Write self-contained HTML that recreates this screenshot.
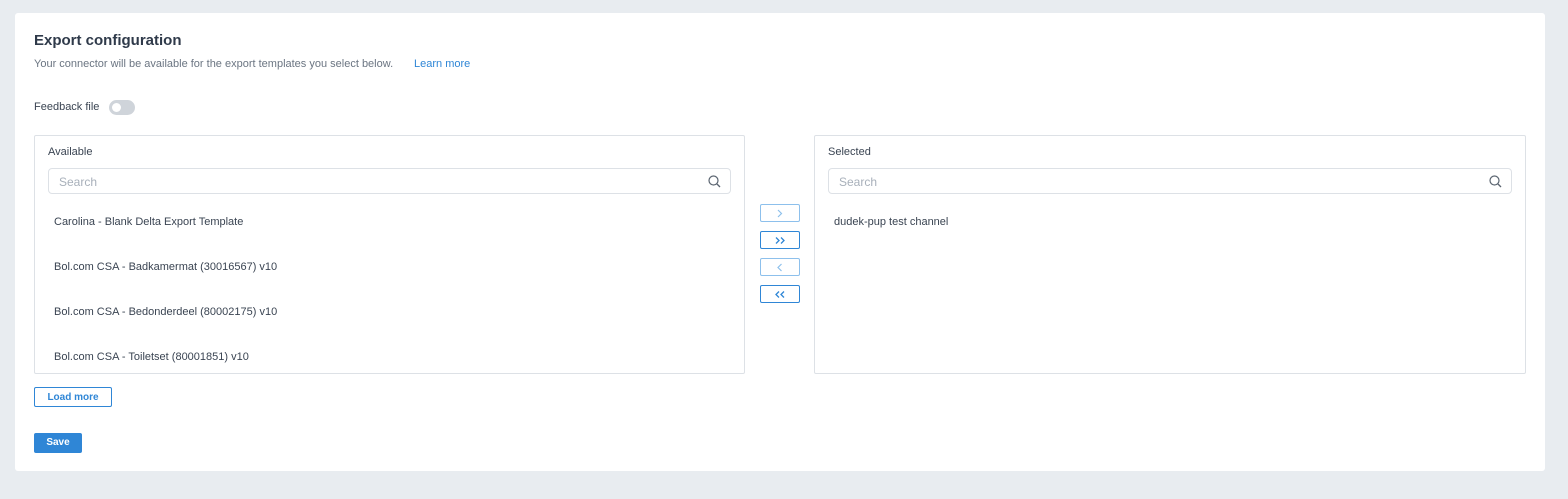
<!DOCTYPE html>
<html><head><style>
*{box-sizing:border-box;margin:0;padding:0}
body{width:1568px;height:499px;background:#e8ecf0;font-family:"Liberation Sans",Arial,sans-serif;position:relative;overflow:hidden;color:#3a4452}
.card{position:absolute;left:15px;top:13px;width:1530px;height:458px;background:#fff;border-radius:3px}
.a{position:absolute}
h1{position:absolute;left:34px;top:32px;font-size:15px;font-weight:bold;color:#2f3a4a}
.panel{position:absolute;top:135px;height:239px;border:1px solid #dde1e6;border-radius:2px;background:#fff}
.lbl{position:absolute;left:13px;top:10px;font-size:11px;color:#3a4452}
.search{position:absolute;left:13px;top:32px;height:26px;border:1px solid #dde1e6;border-radius:4px;font-size:12px;color:#a8b0ba;padding:6px 10px}
.item{position:absolute;left:19px;font-size:11px;color:#3a4452}
.btn{position:absolute;left:760px;width:40px;height:18px;border:1px solid #2f86d6;border-radius:2px;background:#fff}
.btn svg{position:absolute;left:14px;top:4px}
.dis{border-color:#8dc0ec}
</style></head><body>
<div class="card"></div>
<h1>Export configuration</h1>
<div class="a" style="left:34px;top:58px;font-size:11px;color:#6b7582;white-space:nowrap">Your connector will be available for the export templates you select below.</div>
<div class="a" style="left:414px;top:58px;font-size:11px;color:#2f86d6">Learn more</div>
<div class="a" style="left:34px;top:101px;font-size:11px;color:#3a4452">Feedback file</div>
<div class="a" style="left:109px;top:100px;width:26px;height:15px;border-radius:8px;background:#cfd4da"><div style="position:absolute;left:3px;top:3px;width:9px;height:9px;border-radius:50%;background:#fff"></div></div>

<div class="panel" style="left:34px;width:711px">
<div class="lbl">Available</div>
<div class="search" style="width:683px">Search<svg style="position:absolute;right:9px;top:6px" width="13" height="13" viewBox="0 0 13 13"><circle cx="5.5" cy="5.5" r="4.5" fill="none" stroke="#5a6470" stroke-width="1.2"/><path d="M9 9l3 3" stroke="#5a6470" stroke-width="1.3"/></svg></div>
<div class="item" style="top:80px">Carolina - Blank Delta Export Template</div>
<div class="item" style="top:125px">Bol.com CSA - Badkamermat (30016567) v10</div>
<div class="item" style="top:170px">Bol.com CSA - Bedonderdeel (80002175) v10</div>
<div class="item" style="top:215px">Bol.com CSA - Toiletset (80001851) v10</div>
</div>

<div class="btn dis" style="top:204px"><svg width="10" height="9" viewBox="0 0 10 9"><path d="M3 1l3.5 3.5L3 8" fill="none" stroke="#8dc0ec" stroke-width="1.2"/></svg></div>
<div class="btn" style="top:231px"><svg width="12" height="9" viewBox="0 0 12 9"><path d="M1 1.5l3 3-3 3M6 1.5l3 3-3 3" fill="none" stroke="#2f86d6" stroke-width="1.3"/></svg></div>
<div class="btn dis" style="top:258px"><svg width="10" height="9" viewBox="0 0 10 9"><path d="M6.5 1L3 4.5 6.5 8" fill="none" stroke="#8dc0ec" stroke-width="1.2"/></svg></div>
<div class="btn" style="top:285px"><svg width="12" height="9" viewBox="0 0 12 9"><path d="M4 1.5l-3 3 3 3M9 1.5l-3 3 3 3" fill="none" stroke="#2f86d6" stroke-width="1.3"/></svg></div>

<div class="panel" style="left:814px;width:712px">
<div class="lbl">Selected</div>
<div class="search" style="width:684px">Search<svg style="position:absolute;right:9px;top:6px" width="13" height="13" viewBox="0 0 13 13"><circle cx="5.5" cy="5.5" r="4.5" fill="none" stroke="#5a6470" stroke-width="1.2"/><path d="M9 9l3 3" stroke="#5a6470" stroke-width="1.3"/></svg></div>
<div class="item" style="top:80px">dudek-pup test channel</div>
</div>

<div class="a" style="left:34px;top:387px;width:78px;height:20px;border:1px solid #2f86d6;border-radius:2px;color:#2f86d6;font-size:10px;font-weight:bold;text-align:center;line-height:19px">Load more</div>
<div class="a" style="left:34px;top:433px;width:48px;height:20px;background:#2f86d6;border-radius:2px;color:#fff;font-size:10px;font-weight:bold;text-align:center;line-height:20px">Save</div>
</body></html>
